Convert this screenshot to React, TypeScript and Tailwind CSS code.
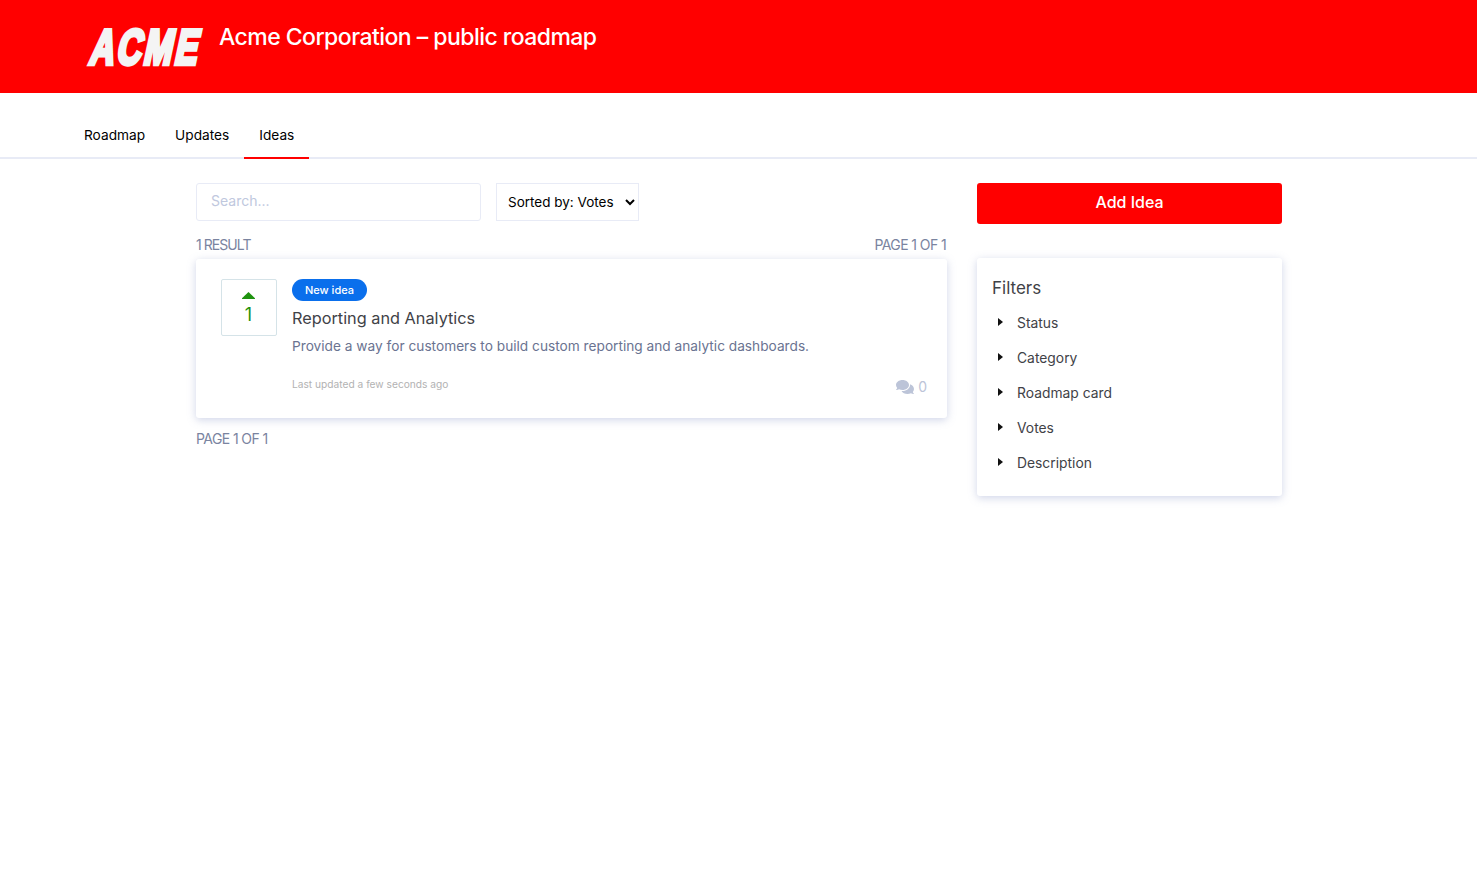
import { FaComments } from 'react-icons/fa';

const FILTERS = ['Status', 'Category', 'Roadmap card', 'Votes', 'Description'];

function Tab({ label, active }: { label: string; active?: boolean }) {
  return (
    <a className={`flex h-[47px] items-center border-y-2 border-t-transparent px-[15px] text-[13.7px] text-black ${active ? 'border-b-[#ff0000]' : 'border-b-transparent'}`}>
      {label}
    </a>
  );
}

export default function App() {
  return (
    <div className="min-h-[891px] bg-white font-['Inter',sans-serif]">
      <header className="flex h-[93px] items-start bg-[#ff0000] pl-[89px]">
        <div className="mt-[24px] flex h-[46px] w-[116px] -skew-x-12 items-center justify-center">
          <span className="scale-y-[1.45] font-['Liberation_Sans',sans-serif] text-[34px] leading-none font-bold tracking-[2.5px] text-[#f4f4f4] [-webkit-text-stroke:3px_#f4f4f4]">
            ACME
          </span>
        </div>
        <h1 className="mt-[22px] ml-[14px] text-[23px] leading-[30px] font-medium tracking-[-0.54px] text-white">
          Acme Corporation – public roadmap
        </h1>
      </header>

      <nav className="flex h-[66px] items-end border-b-2 border-[#e8ebf6] pl-[69px]">
        <div className="-mb-[2px] flex">
          <Tab label="Roadmap" />
          <Tab label="Updates" />
          <Tab label="Ideas" active />
        </div>
      </nav>

      <main className="ml-[196px] flex w-[1086px] items-start gap-[30px] pt-[24px]">
        <section className="w-[751px]">
          <div className="flex gap-[15px]">
            <input
              placeholder="Search..."
              className="h-[38px] w-[285px] rounded-[3px] border border-[#e8ebf6] bg-white px-[14px] pb-[3px] text-[14px] outline-none placeholder:text-[#c0c8de]"
            />
            <select className="h-[38px] w-[143px] border border-[#e8ebf6] bg-white px-[7px] text-[13.5px] text-black outline-none">
              <option>Sorted by: Votes</option>
            </select>
          </div>

          <div className="mt-[15px] flex h-[16px] items-center justify-between text-[14px] tracking-[-0.6px] text-[#7a84a0]">
            <span className="tracking-[-0.95px]">1 RESULT</span>
            <span className="pr-[1px]">PAGE 1 OF 1</span>
          </div>

          <article className="mt-[7px] flex h-[159px] rounded-[3px] bg-white pt-[20px] pr-[20px] pl-[25px] shadow-[0_2px_8px_rgba(120,135,190,0.35)]">
            <div className="flex h-[57px] w-[56px] shrink-0 flex-col items-center rounded-[2px] border border-[#d5e3e8] pt-[12px] pr-[1px] text-[#1f9310]">
              <svg width="13" height="7" viewBox="0 0 13 7" fill="currentColor" aria-hidden="true">
                <path d="M6.5 0 13 6.2a.5.5 0 0 1-.4.8H.4a.5.5 0 0 1-.4-.8Z" />
              </svg>
              <span className="mt-[5px] text-[18px] leading-[22px]">1</span>
            </div>
            <div className="ml-[15px] flex-1">
              <span className="flex h-[22px] w-[75px] items-center justify-center rounded-full bg-[#0a6fec] text-[11px] font-medium text-white">
                New idea
              </span>
              <h2 className="mt-[5px] text-[16.3px] leading-[24px] text-[#3f4247]">Reporting and Analytics</h2>
              <p className="mt-[6px] text-[13.7px] leading-[20px] text-[#6a7391]">
                Provide a way for customers to build custom reporting and analytic dashboards.
              </p>
              <div className="mt-[21px] flex items-start justify-between">
                <span className="text-[10.2px] leading-[14px] text-[#b2b2b2]">Last updated a few seconds ago</span>
                <span className="mt-[2px] flex items-center gap-[4px] text-[14px] leading-[16px] text-[#bcc4d8]">
                  <FaComments className="h-[16px] w-[18px]" />0
                </span>
              </div>
            </div>
          </article>

          <p className="mt-[13px] text-[14px] leading-[15px] tracking-[-0.6px] text-[#7a84a0]">PAGE 1 OF 1</p>
        </section>

        <aside className="w-[305px]">
          <button className="block h-[41px] w-full rounded-[3px] bg-[#ff0000] pb-[3px] text-[16px] font-medium text-white">
            Add Idea
          </button>
          <div className="mt-[34px] h-[238px] rounded-[3px] bg-white pt-[18px] pl-[15px] shadow-[0_2px_8px_rgba(120,135,190,0.35)]">
            <h3 className="text-[17px] leading-[24px] text-[#3f4247]">Filters</h3>
            <ul className="mt-[6px]">
              {FILTERS.map(name => (
                <li key={name} className="flex h-[35px] items-center text-[13.85px] text-[#3f4247]">
                  <svg className="-mt-[3px] ml-[6px]" width="5" height="8" viewBox="0 0 5 8" fill="#111" aria-hidden="true">
                    <path d="M0 0 5 4 0 8Z" />
                  </svg>
                  <span className="ml-[14px]">{name}</span>
                </li>
              ))}
            </ul>
          </div>
        </aside>
      </main>
    </div>
  );
}
